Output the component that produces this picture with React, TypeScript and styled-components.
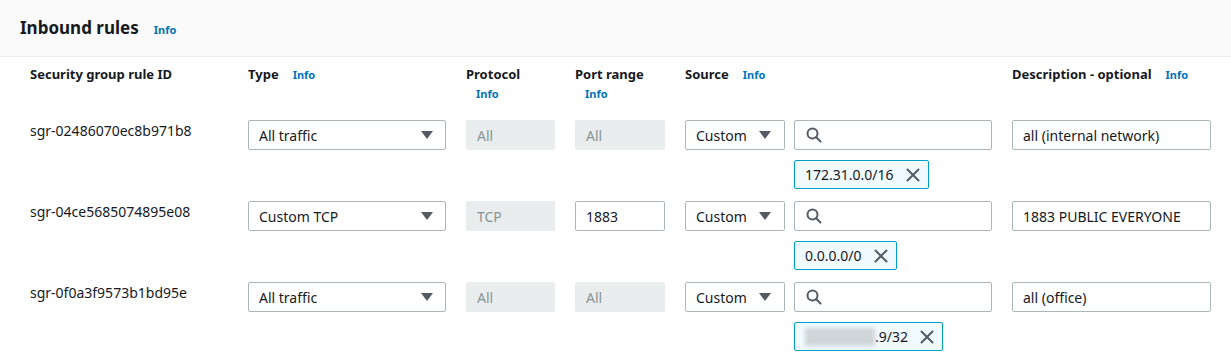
import { Fragment } from 'react';
import styled, { createGlobalStyle } from 'styled-components';

const GlobalStyle = createGlobalStyle`
  body {
    margin: 0;
    background: #ffffff;
    font-family: 'Noto Sans', 'Open Sans', sans-serif;
    color: #16191f;
  }
`;

const Panel = styled.div`
  width: 1231px;
  height: 363px;
  overflow: hidden;
  background: #ffffff;
`;

const Header = styled.div`
  display: flex;
  align-items: baseline;
  gap: 15px;
  height: 57px;
  box-sizing: border-box;
  padding: 16px 20px 0;
  background: #fafafa;
  border-bottom: 1px solid #eaeded;
`;

const Title = styled.h2`
  margin: 0;
  font-size: 17px;
  font-weight: 700;
`;

const Info = styled.a<{ $wrap?: boolean; $flush?: boolean }>`
  color: #0073bb;
  font-size: 11px;
  font-weight: 700;
  text-decoration: none;
  margin-left: ${(p) => (p.$flush ? '0' : p.$wrap ? '10px' : '14px')};
  display: ${(p) => (p.$wrap ? 'block' : 'inline')};
  margin-top: ${(p) => (p.$wrap ? '4px' : '0')};
`;

const Grid = styled.div`
  display: grid;
  grid-template-columns: 198px 198px 89px 90px 307px 199px;
  column-gap: 20px;
  padding: 9px 0 0 30px;
`;

const Head = styled.div`
  font-size: 13px;
  font-weight: 700;
  line-height: 16px;
  height: 54px;
`;

const IdCell = styled.div`
  font-size: 14px;
  padding-top: 2px;
  line-height: 18px;
`;

const Cell = styled.div`
  height: 81px;
`;

const Box = styled.div<{ $disabled?: boolean }>`
  height: 30px;
  box-sizing: border-box;
  border: 1px solid ${(p) => (p.$disabled ? '#eaeded' : '#aab7b8')};
  background: ${(p) => (p.$disabled ? '#eaeded' : '#ffffff')};
  color: ${(p) => (p.$disabled ? '#879596' : '#16191f')};
  border-radius: 2px;
  display: flex;
  align-items: center;
  justify-content: space-between;
  padding: 0 12px 0 10px;
  font-size: 14px;
`;

const Caret = styled.span`
  width: 0;
  height: 0;
  border-left: 6px solid transparent;
  border-right: 6px solid transparent;
  border-top: 8px solid #545b64;
`;

const SourceRow = styled.div`
  display: flex;
  gap: 9px;
`;

const SourceSelect = styled(Box)`
  width: 100px;
  padding-right: 13px;
`;

const Search = styled(Box)`
  flex: 1;
  justify-content: flex-start;
  padding-left: 11px;
`;

const Tag = styled.div`
  margin-left: 109px;
  margin-top: 10px;
  height: 29px;
  box-sizing: border-box;
  display: inline-flex;
  align-items: center;
  gap: 12px;
  padding: 0 8px 0 10px;
  border: 1px solid #00a1c9;
  border-radius: 2px;
  background: #f1faff;
  font-size: 14px;
`;

const TagText = styled.span`
  display: inline-flex;
  align-items: center;
`;

const Blur = styled.span`
  display: inline-block;
  width: 70px;
  height: 18px;
  background: #cfd5d8;
  filter: blur(2px);
`;

const SearchIcon = () => (
  <svg width="16" height="16" viewBox="0 0 16 16" fill="none" stroke="#545b64" strokeWidth="2">
    <circle cx="6.5" cy="6.5" r="5" />
    <path d="M10 10l4.5 4.5" strokeLinecap="round" />
  </svg>
);

const CloseIcon = () => (
  <svg width="14" height="14" viewBox="0 0 14 14" stroke="#545b64" strokeWidth="2" strokeLinecap="round">
    <path d="M1.5 1.5l11 11M12.5 1.5l-11 11" />
  </svg>
);

interface Rule {
  id: string;
  type: string;
  protocol: string;
  port: string;
  portEditable: boolean;
  source: string;
  blurred?: boolean;
  description: string;
}

const rules: Rule[] = [
  { id: 'sgr-02486070ec8b971b8', type: 'All traffic', protocol: 'All', port: 'All', portEditable: false, source: '172.31.0.0/16', description: 'all (internal network)' },
  { id: 'sgr-04ce5685074895e08', type: 'Custom TCP', protocol: 'TCP', port: '1883', portEditable: true, source: '0.0.0.0/0', description: '1883 PUBLIC EVERYONE' },
  { id: 'sgr-0f0a3f9573b1bd95e', type: 'All traffic', protocol: 'All', port: 'All', portEditable: false, source: '.9/32', blurred: true, description: 'all (office)' },
];

export default function App() {
  return (
    <Panel>
      <GlobalStyle />
      <Header>
        <Title>Inbound rules</Title>
        <Info $flush>Info</Info>
      </Header>
      <Grid>
        <Head>Security group rule ID</Head>
        <Head>
          Type<Info>Info</Info>
        </Head>
        <Head>
          Protocol<Info $wrap>Info</Info>
        </Head>
        <Head>
          Port range<Info $wrap>Info</Info>
        </Head>
        <Head>
          Source<Info>Info</Info>
        </Head>
        <Head>
          Description - optional<Info>Info</Info>
        </Head>
        {rules.map((r) => (
          <Fragment key={r.id}>
            <Cell>
              <IdCell>{r.id}</IdCell>
            </Cell>
            <Cell>
              <Box>
                {r.type}
                <Caret />
              </Box>
            </Cell>
            <Cell>
              <Box $disabled>{r.protocol}</Box>
            </Cell>
            <Cell>
              <Box $disabled={!r.portEditable}>{r.port}</Box>
            </Cell>
            <Cell>
              <SourceRow>
                <SourceSelect>
                  Custom
                  <Caret />
                </SourceSelect>
                <Search>
                  <SearchIcon />
                </Search>
              </SourceRow>
              <Tag>
                <TagText>
                  {r.blurred && <Blur />}
                  {r.source}
                </TagText>
                <CloseIcon />
              </Tag>
            </Cell>
            <Cell>
              <Box>{r.description}</Box>
            </Cell>
          </Fragment>
        ))}
      </Grid>
    </Panel>
  );
}
